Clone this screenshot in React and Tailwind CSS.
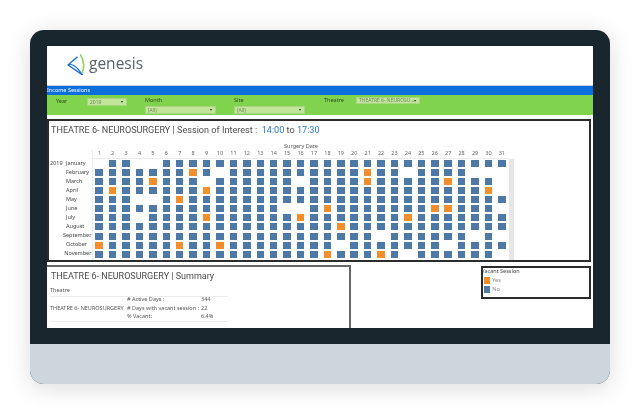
import React from 'react';

// B = no vacancy, O = vacant session, . = no data (days 1-31)
const months = [
  ['January', '.BB..BBBBBBBBBBBBBBBBBBBBBBBBBB'],
  ['February', 'BBBBBBBOB.BBBBBBBBBBOBB.BBBB...'],
  ['March', 'BBBBOBBB.BBBBBB.BBBBOBBBBBOBBB.'],
  ['April', 'BOBBBBBBOBBBBBBBBBBBBBBBBBBBBO.'],
  ['May', 'BBB..BOBBBBBBBBBBBBBBBBBBBBBBBB'],
  ['June', 'BBBBBBBBBBBBBB..BOBBBBBBBOOBBB.'],
  ['July', 'BBB.BBBBOBBBBBBOBBBBBBBOBBBBBBB'],
  ['August', 'BBBBBBBBBBBBBBBBBBOBBBBBBBBBBBB'],
  ['September', 'BBBBBBBBBBBBBBBBBBBBB.BBBBBB.B.'],
  ['October', 'OBBBBBOBBOBBBBBBBB.BBBBBBB.BBBB'],
  ['November', 'BBBBBBBBBBBBBBBBBOBBBOB.BBBBBB.'],
  ['December', 'BBBBBBB.BBBBBBBBBBBBB.BBBBBBBOB'],
];

const days = Array.from({ length: 31 }, (_, i) => i + 1);

function Dropdown({ value, className }) {
  return (
    <div className={`flex items-center justify-between bg-[#c0e59b] border border-[#a9d484] pl-[2px] pr-[3px] text-[5px] leading-none text-[#6f8a5c] whitespace-nowrap overflow-hidden ${className}`}>
      <span>{value}</span>
      <span className="w-0 h-0 border-x-[1.5px] border-x-transparent border-t-[2px] border-t-[#333]" />
    </div>
  );
}

function Logo() {
  return (
    <div className="flex items-center gap-[4px]">
      <svg width="18" height="22" viewBox="0 0 18 22" fill="none">
        <path d="M10.500 2.800 L1 11 L15.500 20.800" stroke="#1a6fd0" strokeWidth="1.400" strokeLinejoin="round" />
        <path d="M1 11 C6 9 10 13 15.500 20.800" stroke="#1a6fd0" strokeWidth="1.100" />
        <path d="M13.500 0.800 C17.300 6.500 17.300 14 15.200 18.500" stroke="#8ad14f" strokeWidth="1.500" strokeLinecap="round" />
      </svg>
      <span className="font-['Open_Sans',sans-serif] text-[15.500px] leading-none text-[#5b6268] pb-[2px]">genesis</span>
    </div>
  );
}

function Calendar() {
  return (
    <div className="h-[143px] border-2 border-[#2b2b2b] overflow-hidden bg-white">
      <div className="pl-[2px] pt-[2px] font-['Roboto',sans-serif] text-[9.100px] leading-[14px] text-[#4d4d4d] whitespace-pre">
        THEATRE 6- NEUROSURGERY | Session of Interest :  <span className="text-[#2a7bc8]">14:00</span> to <span className="text-[#2a7bc8]">17:30</span>
      </div>
      <div className="pl-[235px] pt-[5px] text-[5.500px] leading-[8px] text-[#555]">Surgery Date</div>
      <div className="flex">
        <div className="w-[43.500px] shrink-0 pt-[9px] border-r border-[#ececec]">
          {months.map(([name], i) => (
            <div key={name} className="flex h-[9.070px] items-center text-[5.500px] leading-none text-[#444]">
              <span className="w-[17px] pl-px">{i === 0 ? '2019' : ''}</span>
              <span>{name}</span>
            </div>
          ))}
        </div>
        <div>
          <div className="grid grid-cols-[repeat(31,13.430px)] h-[9px] border-b border-[#ececec]">
            {days.map(d => (
              <div key={d} className="text-center text-[5.500px] leading-[7px] text-[#666]">{d}</div>
            ))}
          </div>
          {months.map(([name, row]) => (
            <div key={name} className="grid grid-cols-[repeat(31,13.430px)] h-[9.070px]">
              {days.map((d, i) => (
                <div key={d} className="flex items-center justify-center">
                  {row[i] === 'B' && <div className="w-[7.500px] h-[7px] bg-[#4e79a7]" />}
                  {row[i] === 'O' && <div className="w-[7.500px] h-[7px] bg-[#f28e2b]" />}
                </div>
              ))}
            </div>
          ))}
        </div>
        <div className="w-[5px] h-[102px] mt-[9px] bg-[#e6e6e6]" />
      </div>
    </div>
  );
}

function Summary() {
  return (
    <div className="w-[305px] h-[70px] border-t-2 border-r-2 border-[#666] pl-[3px] text-[#555]">
      <div className="pl-px font-['Roboto',sans-serif] text-[9px] leading-[12px] pt-[3px] text-[#4d4d4d]">THEATRE 6- NEUROSURGERY | Summary</div>
      <div className="w-[178px] text-[5.500px] leading-none">
        <div className="pt-[6px] pb-[2px] border-b border-[#ececec]">Theatre</div>
        <div className="flex items-center border-b border-[#ececec] h-[25px]">
          <div className="w-[77px] shrink-0">THEATRE 6- NEUROSURGERY</div>
          <div className="grow">
            <div className="flex h-[8.300px] items-center"><span className="w-[74px]"># Active Days :</span><span>344</span></div>
            <div className="flex h-[8.300px] items-center"><span className="w-[74px]"># Days with vacant session :</span><span>22</span></div>
            <div className="flex h-[8.300px] items-center"><span className="w-[74px]">% Vacant:</span><span>6.4%</span></div>
          </div>
        </div>
      </div>
    </div>
  );
}

function Legend() {
  return (
    <div className="w-[110px] h-[33px] border-2 border-[#2b2b2b] text-[5.500px] leading-none ml-[130px] mt-px mr-[2px]">
      <div className="text-[#444] ml-[-2px] pt-[1px] h-[8px]">Vacant Session</div>
      <div className="flex items-center gap-[2px] h-[9px] pl-[1px] text-[#888]"><span className="w-[6px] h-[6.500px] bg-[#f28e2b]" />Yes</div>
      <div className="flex items-center gap-[2px] h-[9px] pl-[1px] text-[#888]"><span className="w-[6px] h-[6.500px] bg-[#4e79a7]" />No</div>
    </div>
  );
}

export default function App() {
  return (
    <div className="w-[640px] h-[414px] bg-white pt-[30px] pl-[30px] overflow-hidden font-['Noto_Sans',sans-serif]">
      <div className="w-[580px] h-[354px] rounded-[14px] overflow-hidden shadow-[0_4px_24px_rgba(0,0,0,0.14)] bg-[#1a262e]">
        <div className="h-[314px] pt-[16px] pl-[17px]">
          <div className="w-[546px] h-[282px] bg-white overflow-hidden blur-[0.35px]">
            <div className="h-[39px] pl-[20px] pt-[8px]">
              <Logo />
            </div>
            <div className="h-[10px] border-t border-[#c5d3e0] bg-[#0a6fdc] text-[5.500px] leading-[9px] text-white">Income Sessions</div>
            <div className="h-[20px] bg-[#80d34c] flex text-[5.500px] leading-none text-[#2d4a1e]">
              <div className="w-[40px] pl-[9px] pt-[4px]">Year</div>
              <Dropdown value="2019" className="w-[40px] h-[8px] mt-[3px]" />
              <div className="w-[71px] ml-[18px] pt-[3px]">
                <div className="h-[8px]">Month</div>
                <Dropdown value="(All)" className="h-[8px]" />
              </div>
              <div className="w-[71px] ml-[18px] pt-[3px]">
                <div className="h-[8px]">Site</div>
                <Dropdown value="(All)" className="h-[8px]" />
              </div>
              <div className="w-[32px] ml-[19px] pt-[3px]">Theatre</div>
              <Dropdown value="THEATRE 6- NEUROSU..." className="w-[64px] h-[7px] mt-[2px]" />
            </div>
            <div className="pt-[4px] pr-[2px]">
              <Calendar />
            </div>
            <div className="flex pt-[3px]">
              <Summary />
              <Legend />
            </div>
          </div>
        </div>
        <div className="h-[40px] bg-[#ccd6dc]" />
      </div>
    </div>
  );
}
